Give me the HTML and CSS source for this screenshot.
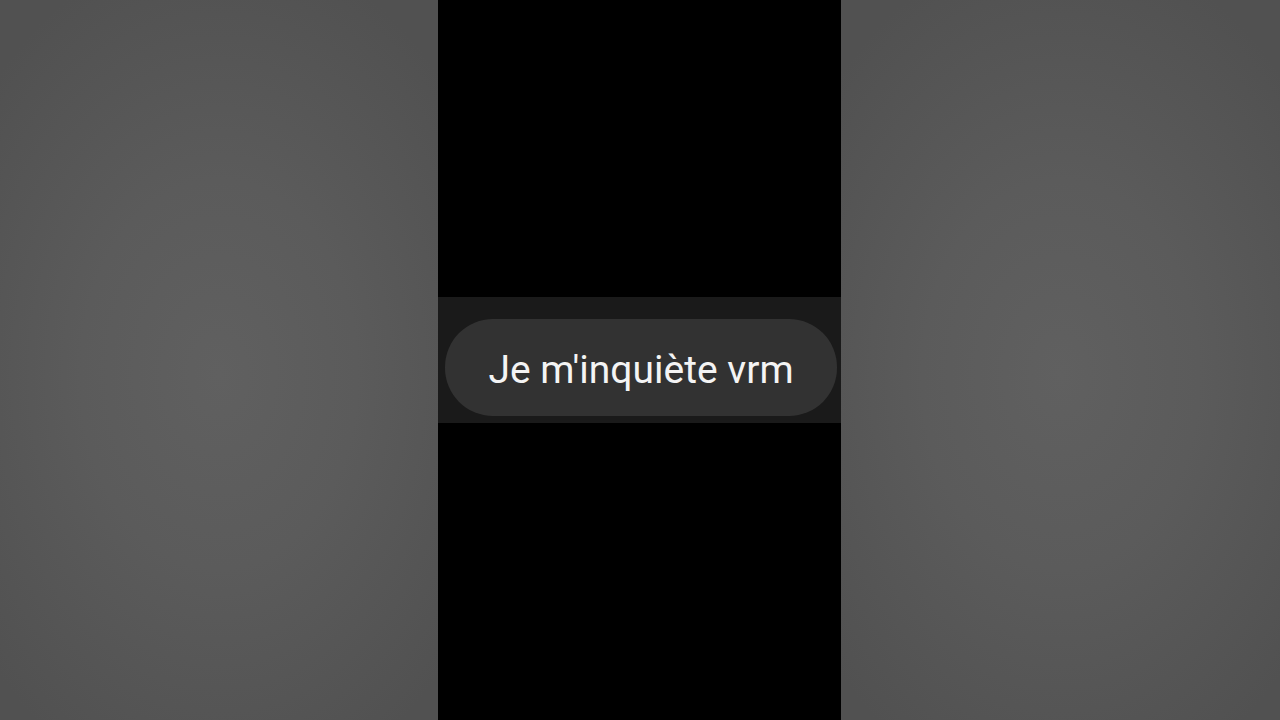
FILE: index.html
```html
<!DOCTYPE html>
<html lang="fr">
<head>
<meta charset="utf-8">
<link rel="stylesheet" href="styles.css">
</head>
<body>
<div class="stage">
  <div class="side side-left"></div>
  <div class="phone">
    <div class="strip">
      <div class="bubble">Je m'inquiète vrm</div>
    </div>
  </div>
  <div class="side side-right"></div>
</div>
</body>
</html>
```
FILE: styles.css
```css
html, body {
  margin: 0;
  padding: 0;
  width: 1280px;
  height: 720px;
  overflow: hidden;
  background: #000;
}
.stage {
  display: flex;
  width: 1280px;
  height: 720px;
}
.side {
  background: radial-gradient(ellipse 70% 60% at 50% 52%, #606060 0%, #5b5b5b 45%, #515151 100%);
}
.side-left {
  width: 438px;
}
.side-right {
  width: 439px;
}
.phone {
  width: 403px;
  background: #000;
  display: flex;
  flex-direction: column;
  padding-top: 297px;
  box-sizing: border-box;
}
.strip {
  height: 126px;
  background: #1a1a1a;
  display: flex;
  align-items: flex-end;
  padding: 0 4px 7px 7px;
  box-sizing: border-box;
}
.bubble {
  flex: 1;
  height: 97px;
  border-radius: 48px;
  background: #323232;
  color: #f4f4f4;
  font-family: Roboto, "Noto Sans", sans-serif;
  font-size: 39px;
  display: flex;
  align-items: center;
  justify-content: center;
  padding-top: 4px;
  box-sizing: border-box;
}
```
